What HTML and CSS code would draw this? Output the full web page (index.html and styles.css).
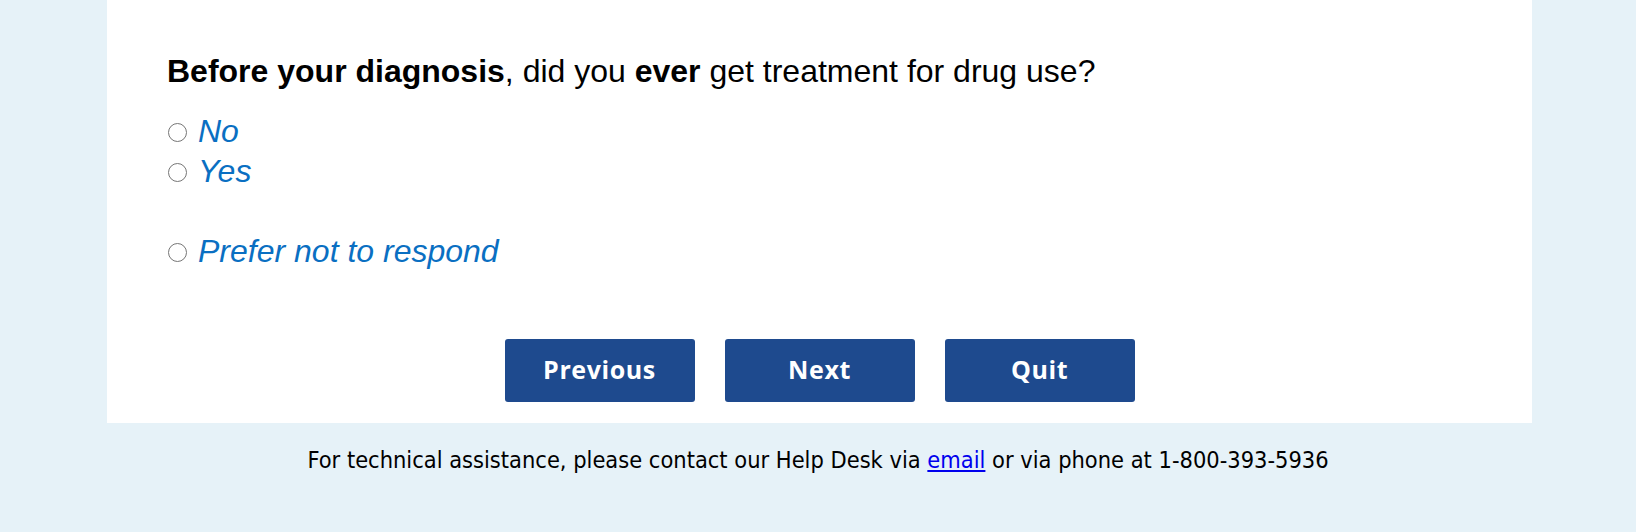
FILE: index.html
```html
<!DOCTYPE html>
<html>
<head>
<meta charset="utf-8">
<link rel="stylesheet" href="styles.css">
</head>
<body>
<main class="panel">
  <p class="question"><b>Before your diagnosis</b>, did you <b>ever</b> get treatment for drug use?</p>
  <div class="options">
    <label class="option"><span class="radio"></span><span class="opt-text">No</span></label>
    <label class="option"><span class="radio"></span><span class="opt-text">Yes</span></label>
    <label class="option option-spaced"><span class="radio"></span><span class="opt-text">Prefer not to respond</span></label>
  </div>
  <div class="buttons">
    <button class="btn">Previous</button>
    <button class="btn">Next</button>
    <button class="btn">Quit</button>
  </div>
</main>
<footer class="footer">For technical assistance, please contact our Help Desk via <a href="#" class="link">email</a> or via phone at 1-800-393-5936</footer>
</body>
</html>
```
FILE: styles.css
```css
html, body {
  margin: 0;
  padding: 0;
}
body {
  background: #e6f2f8;
  width: 1636px;
  height: 532px;
  overflow: hidden;
}
.panel {
  background: #ffffff;
  width: 1425px;
  margin-left: 107px;
  padding: 53px 0 21px 60px;
  box-sizing: border-box;
}
.question {
  margin: 0;
  font-family: "Liberation Sans", Arial, sans-serif;
  font-size: 32px;
  line-height: 37px;
  color: #000;
}
.question b {
  font-weight: bold;
}
.options {
  display: flex;
  flex-direction: column;
  margin-top: 21px;
}
.option {
  display: flex;
  align-items: center;
  height: 40px;
  font-family: "Liberation Sans", Arial, sans-serif;
  font-size: 32px;
  font-style: italic;
  color: #0a6fc2;
}
.option-spaced {
  margin-top: 40px;
}
.radio {
  width: 17px;
  height: 17px;
  border: 1.6px solid #767676;
  border-radius: 50%;
  box-sizing: content-box;
  margin: 3px 11px 0 1px;
  flex: none;
}
.buttons {
  display: flex;
  justify-content: center;
  gap: 30px;
  margin-top: 68px;
  margin-left: -60px;
}
.btn {
  width: 190px;
  height: 63px;
  background: #1e4a8e;
  color: #fff;
  border: none;
  border-radius: 3px;
  font-family: "Open Sans", sans-serif;
  font-weight: bold;
  font-size: 25px;
  letter-spacing: 0.6px;
  padding: 0 0 4px;
}
.footer {
  text-align: center;
  font-family: "DejaVu Sans Condensed", "DejaVu Sans", sans-serif;
  font-stretch: condensed;
  font-size: 23.4px;
  color: #000;
  margin-top: 23px;
  line-height: 28px;
}
.link {
  color: #0000ee;
  text-decoration: underline;
}
```
